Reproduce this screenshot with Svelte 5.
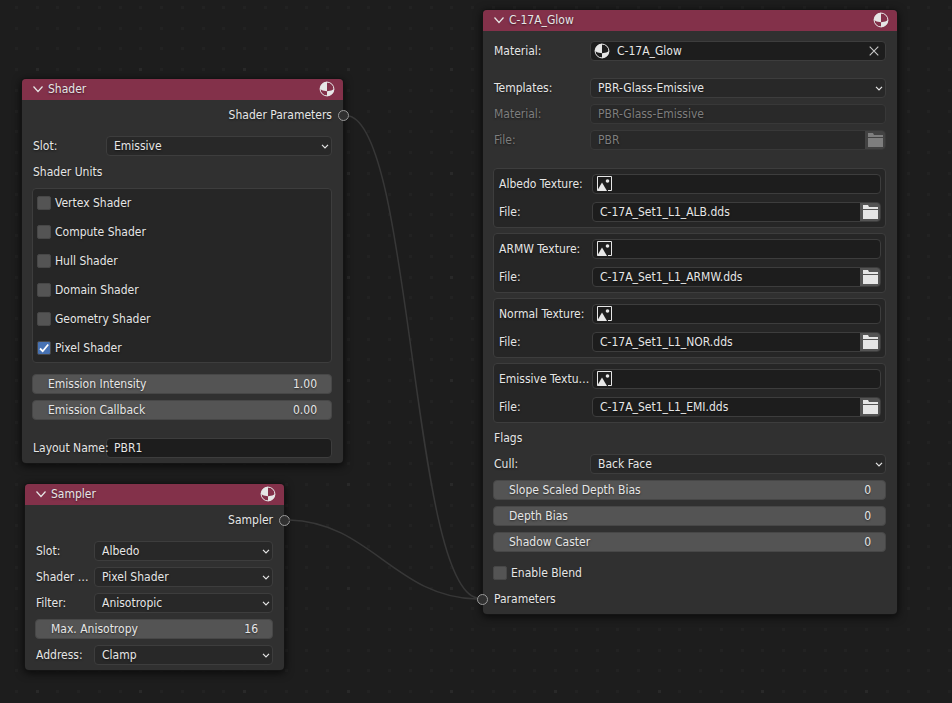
<script>
  const STEP = 622 / 30;
  const dots = [];
  for (let row = 0; row < 30; row++) {
    for (let col = 0; col < 30; col++) {
      dots.push({
        x: Math.round(15 + col * STEP),
        y: Math.round(6 + row * STEP),
        major: col % 5 === 1 && row % 5 === 3
      });
    }
  }

  let units = $state([
    { name: 'Vertex Shader', on: false },
    { name: 'Compute Shader', on: false },
    { name: 'Hull Shader', on: false },
    { name: 'Domain Shader', on: false },
    { name: 'Geometry Shader', on: false },
    { name: 'Pixel Shader', on: true }
  ]);

  const textures = [
    { label: 'Albedo Texture:', file: 'C-17A_Set1_L1_ALB.dds' },
    { label: 'ARMW Texture:', file: 'C-17A_Set1_L1_ARMW.dds' },
    { label: 'Normal Texture:', file: 'C-17A_Set1_L1_NOR.dds' },
    { label: 'Emissive Textu…', file: 'C-17A_Set1_L1_EMI.dds' }
  ];
</script>

{#snippet sphere()}
  <svg class="sphere" width="16" height="16" viewBox="0 0 16 16" aria-hidden="true">
    <circle cx="8" cy="8" r="6.9" fill="none" stroke="currentColor" stroke-width="1" />
    <path d="M8 .8A7.2 7.2 0 0 0 .8 8Q3 10 8 10.2Z" fill="currentColor" />
    <path d="M8 10.2Q13 10 15.2 8A7.2 7.2 0 0 1 8 15.2Z" fill="currentColor" />
  </svg>
{/snippet}

{#snippet folder()}
  <svg width="16" height="16" viewBox="0 0 16 16" aria-hidden="true">
    <path d="M1 1h5l1 2h9v2H1zM1 6h15v9H1z" fill="currentColor" />
  </svg>
{/snippet}

{#snippet header(title)}
  <header>
    <button class="collapse" aria-label="Collapse {title}">
      <svg width="12" height="8" viewBox="0 0 12 8" aria-hidden="true">
        <path d="M1.5 1.5L6 6.5L10.5 1.5" fill="none" stroke="currentColor" stroke-width="1.2" />
      </svg>
    </button>
    <h2>{title}</h2>
    {@render sphere()}
  </header>
{/snippet}

{#snippet dropdown(id, label, value)}
  <div class="row">
    <label for={id}>{label}</label>
    <div class="select">
      <select {id}><option>{value}</option></select>
      <svg width="8" height="6" viewBox="0 0 8 6" aria-hidden="true">
        <path d="M1 1.8L4 4.8L7 1.8" fill="none" stroke="currentColor" stroke-width="1.2" />
      </svg>
    </div>
  </div>
{/snippet}

{#snippet number(id, label, value)}
  <div class="number">
    <label for={id}>{label}</label>
    <input {id} type="text" inputmode="decimal" {value} />
  </div>
{/snippet}

<main>
  <svg class="grid" width="100%" height="100%" aria-hidden="true">
    <defs>
      <pattern id="dots" width="622" height="622" patternUnits="userSpaceOnUse">
        {#each dots as d}
          <rect x={d.x} y={d.y} width="3" height="3" fill={d.major ? '#292929' : '#222222'} />
        {/each}
      </pattern>
    </defs>
    <rect width="100%" height="100%" fill="url(#dots)" />
  </svg>

  <section class="node shader">
    {@render header('Shader')}
    <div class="body">
      <div class="row output">Shader Parameters<span class="socket"></span></div>
      <div class="group spaced">
        {@render dropdown('shader-slot', 'Slot:', 'Emissive')}
        <div class="row">Shader Units</div>
        <div class="box units">
          {#each units as unit}
            <label class="check">
              <input type="checkbox" bind:checked={unit.on} />
              <span class="mark">
                <svg width="12" height="12" viewBox="0 0 12 12" aria-hidden="true">
                  <path d="M2 6.5L4.7 9.2L10.2 2.5" fill="none" stroke="#fff" stroke-width="1.8" />
                </svg>
              </span>
              {unit.name}
            </label>
          {/each}
        </div>
      </div>
      <div class="group spaced">
        {@render number('intensity', 'Emission Intensity', '1.00')}
        {@render number('callback', 'Emission Callback', '0.00')}
      </div>
      <div class="row apart">
        <label for="layout">Layout Name:</label>
        <input id="layout" class="text" type="text" value="PBR1" />
      </div>
    </div>
  </section>

  <section class="node sampler">
    {@render header('Sampler')}
    <div class="body">
      <div class="row output">Sampler<span class="socket"></span></div>
      <div class="group spaced">
        {@render dropdown('sampler-slot', 'Slot:', 'Albedo')}
        {@render dropdown('sampler-shader', 'Shader …', 'Pixel Shader')}
        {@render dropdown('sampler-filter', 'Filter:', 'Anisotropic')}
        {@render number('anisotropy', 'Max. Anisotropy', '16')}
        {@render dropdown('sampler-address', 'Address:', 'Clamp')}
      </div>
    </div>
  </section>

  <section class="node material">
    {@render header('C-17A_Glow')}
    <div class="body">
      <div class="row first">
        <label for="material">Material:</label>
        <div class="field">
          {@render sphere()}
          <input id="material" type="text" value="C-17A_Glow" />
          <button class="clear" aria-label="Clear material">
            <svg width="10" height="10" viewBox="0 0 10 10" aria-hidden="true">
              <path d="M.7 .7L9.3 9.3M9.3 .7L.7 9.3" stroke="currentColor" stroke-width="1.1" />
            </svg>
          </button>
        </div>
      </div>
      <div class="group wide">
        {@render dropdown('template', 'Templates:', 'PBR-Glass-Emissive')}
        <div class="row off">
          <label for="template-material">Material:</label>
          <input id="template-material" class="text" type="text" value="PBR-Glass-Emissive" disabled />
        </div>
        <div class="row off">
          <label for="template-file">File:</label>
          <div class="field">
            <input id="template-file" type="text" value="PBR" disabled />
            <button class="browse" aria-label="Browse" disabled>{@render folder()}</button>
          </div>
        </div>
      </div>
      <div class="textures apart">
        {#each textures as t, i}
          <div class="box texture">
            <div class="row">
              <label for="image-{i}">{t.label}</label>
              <div class="field">
                <svg class="image" width="16" height="16" viewBox="0 0 16 16" aria-hidden="true">
                  <path d="M12 14.5H15.5V.5H1.5V14.5" fill="none" stroke="currentColor" stroke-width="1" />
                  <path d="M1 15L6 6.5L11 15Z" fill="currentColor" />
                  <circle cx="11.5" cy="5" r="1.8" fill="currentColor" />
                </svg>
                <input id="image-{i}" type="text" value="" />
              </div>
            </div>
            <div class="row">
              <label for="file-{i}">File:</label>
              <div class="field">
                <input id="file-{i}" type="text" value={t.file} />
                <button class="browse" aria-label="Browse">{@render folder()}</button>
              </div>
            </div>
          </div>
        {/each}
      </div>
      <div class="group flags">
        <div class="row">Flags</div>
        {@render dropdown('cull', 'Cull:', 'Back Face')}
        {@render number('slope', 'Slope Scaled Depth Bias', '0')}
        {@render number('bias', 'Depth Bias', '0')}
        {@render number('caster', 'Shadow Caster', '0')}
      </div>
      <div class="group spaced">
        <label class="check">
          <input type="checkbox" />
          <span class="mark"></span>
          Enable Blend
        </label>
        <div class="row input">Parameters<span class="socket"></span></div>
      </div>
    </div>
  </section>

  <svg class="links" width="100%" height="100%" aria-hidden="true">
    <path d="M349 116C412 130 412 585 477 598" />
    <path d="M289 520C370 522 396 598 477 599" />
  </svg>
</main>

<style>
  :global(body) {
    margin: 0;
    background: #1d1d1d;
  }

  main {
    position: relative;
    min-height: 100vh;
    overflow: hidden;
    color: #e6e6e6;
    font: 12px/20px 'DejaVu Sans Condensed', 'DejaVu Sans', sans-serif;
    text-shadow: 0 1px 2px rgba(0, 0, 0, 0.5);
  }

  .grid,
  .links {
    position: absolute;
    inset: 0;
    pointer-events: none;
  }

  .links path {
    fill: none;
    stroke: #373737;
    stroke-width: 1.5;
  }

  .node {
    position: absolute;
    border-radius: 4px;
    background: #303030;
    box-shadow: 0 0 0 1px #141414, 0 2px 8px 1px rgba(0, 0, 0, 0.7);
    --label: 74px;
  }

  .shader {
    left: 22px;
    top: 79px;
    width: 321px;
  }

  .sampler {
    left: 25px;
    top: 484px;
    width: 259px;
    --label: 59px;
  }

  .material {
    left: 483px;
    top: 10px;
    width: 414px;
    --label: 97px;
  }

  header {
    display: flex;
    align-items: center;
    height: 21px;
    box-sizing: border-box;
    padding: 0 8px 1px 9px;
    border-radius: 4px 4px 0 0;
    background: #83314a;
  }

  h2 {
    flex: 1;
    margin: 0;
    font: inherit;
  }

  button {
    display: flex;
    align-items: center;
    justify-content: center;
    padding: 0;
    border: 0;
    background: none;
    color: inherit;
  }

  .collapse {
    width: 14px;
    margin-right: 3px;
  }

  .sphere,
  .image {
    flex: none;
  }

  .body {
    padding: 5px 11px 5px 10px;
  }

  .group {
    display: flex;
    flex-direction: column;
    gap: 6px;
  }

  .flags {
    margin-top: 5px;
  }

  .spaced {
    margin-top: 11px;
  }

  .wide {
    margin-top: 17px;
  }

  .apart {
    margin-top: 18px;
  }

  .row {
    position: relative;
    display: flex;
    height: 20px;
    padding-left: 1px;
    white-space: nowrap;
  }

  .row.first {
    margin-top: 5px;
  }

  .row > label {
    position: relative;
    flex: none;
    width: calc(var(--label) - 1px);
  }

  .output {
    justify-content: flex-end;
  }

  .socket {
    position: absolute;
    top: 5px;
    width: 9px;
    height: 9px;
    border: 1px solid #9a9a9a;
    border-radius: 50%;
    background: #303030;
  }

  .output .socket {
    right: -17px;
  }

  .input .socket {
    left: -16px;
  }

  input,
  select {
    box-sizing: border-box;
    min-width: 0;
    margin: 0;
    padding: 0;
    border: 0;
    outline: 0;
    background: none;
    color: inherit;
    font: inherit;
    text-shadow: inherit;
  }

  .select {
    flex: 1;
    display: grid;
    align-items: center;
  }

  select {
    grid-area: 1 / 1;
    width: 100%;
    height: 20px;
    padding: 0 7px;
    border: 1px solid #3d3d3d;
    border-radius: 4px;
    background: #282828;
    appearance: none;
    line-height: 18px;
  }

  .select svg {
    grid-area: 1 / 1;
    justify-self: end;
    margin-right: 3px;
    pointer-events: none;
  }

  .text,
  .field {
    flex: 1;
    box-sizing: border-box;
    height: 20px;
    border: 1px solid #3d3d3d;
    border-radius: 4px;
    background: #1d1d1d;
  }

  .text {
    padding: 0 7px;
  }

  .field {
    display: flex;
    align-items: center;
    min-width: 0;
  }

  .field input {
    flex: 1;
    height: 18px;
    padding-left: 7px;
  }

  .field > .sphere,
  .field > .image {
    margin-left: 3px;
  }

  .clear {
    width: 22px;
    height: 18px;
    color: #c8c8c8;
  }

  .browse {
    width: 20px;
    height: 18px;
    border-radius: 0 3px 3px 0;
    background: #545454;
  }

  .off {
    color: #7e7e7e;
  }

  .off .text,
  .off .field {
    border-color: #383838;
    background: #292929;
  }

  .off .browse {
    background: #424242;
  }

  .number {
    display: flex;
    box-sizing: border-box;
    height: 20px;
    padding: 0 14px 0 15px;
    border: 1px solid #474747;
    border-radius: 4px;
    background: #545454;
    line-height: 18px;
  }

  .number input {
    flex: 1;
    text-align: right;
  }

  .box {
    display: flex;
    flex-direction: column;
    border: 1px solid #3d3d3d;
    border-radius: 4px;
    background: #262626;
  }

  .units {
    gap: 9px;
    padding: 4px;
  }

  .check {
    display: flex;
    align-items: center;
    gap: 4px;
    height: 20px;
  }

  .check input {
    position: absolute;
    opacity: 0;
  }

  .mark {
    display: flex;
    align-items: center;
    justify-content: center;
    box-sizing: border-box;
    width: 14px;
    height: 14px;
    border: 1px solid #474747;
    border-radius: 2px;
    background: #545454;
  }

  .mark svg {
    visibility: hidden;
  }

  input:checked + .mark {
    background: #4772b3;
  }

  input:checked + .mark svg {
    visibility: visible;
  }

  .textures {
    display: flex;
    flex-direction: column;
    gap: 5px;
  }

  .texture {
    gap: 8px;
    padding: 5px 4px;
    --label: 94px;
  }
</style>
